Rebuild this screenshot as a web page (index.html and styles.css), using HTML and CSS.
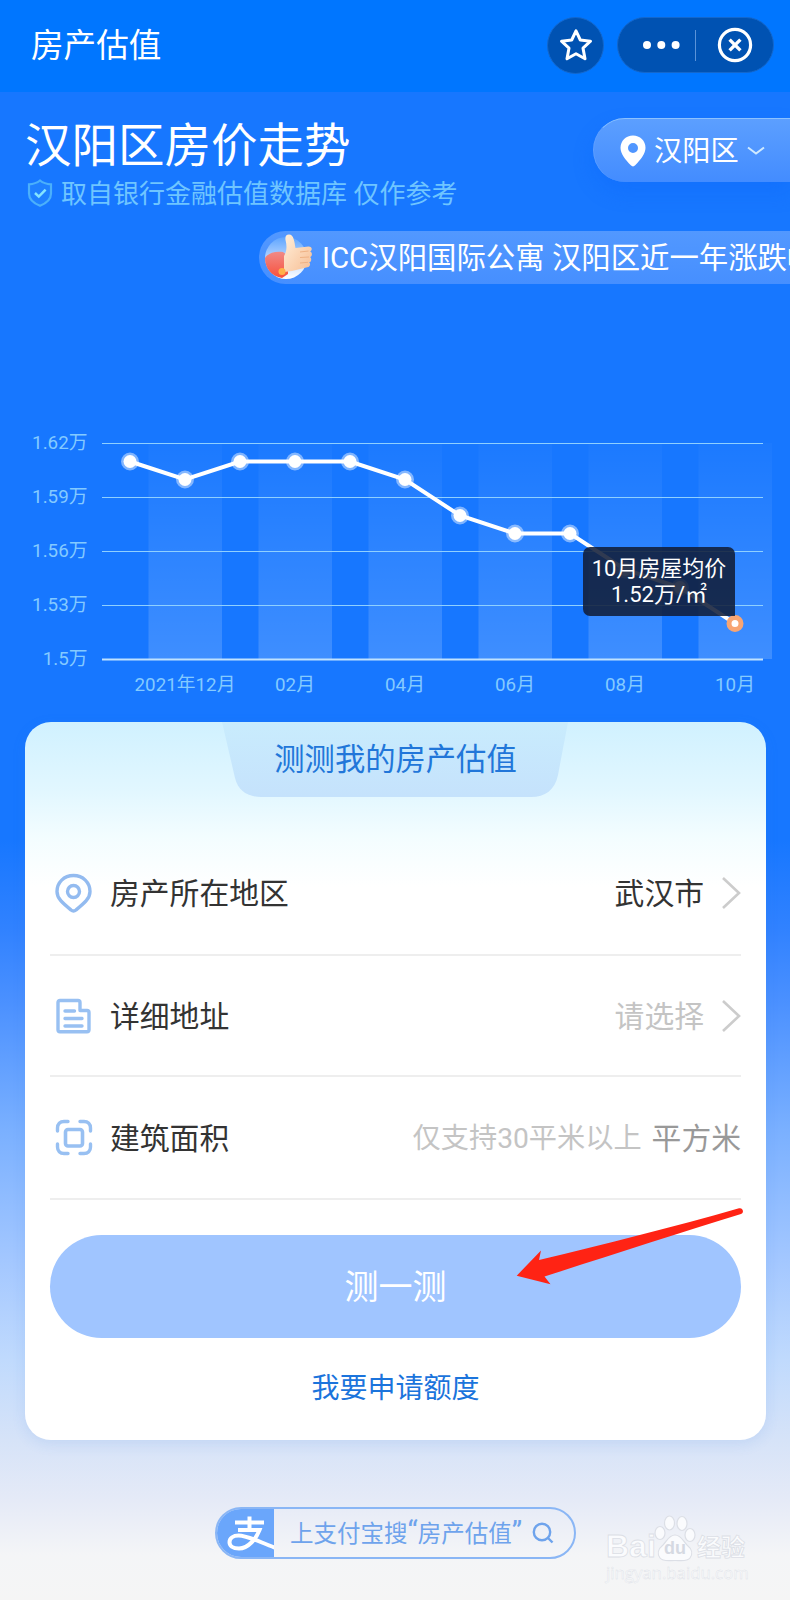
FILE: index.html
```html
<!DOCTYPE html>
<html lang="zh-CN">
<head>
    <meta charset="UTF-8">
    <meta name="viewport" content="width=device-width, initial-scale=1.0">
    <title>房产估值</title>
    <link rel="stylesheet" href="styles.css">
</head>
<body>
    <header class="navbar">
        <h1 class="navbar-title">房产估值</h1>
        <button class="star-btn" aria-label="收藏">
            <svg width="34" height="34" viewBox="0 0 34 34"><path d="M17 2.800l4.300 9.200 10.200 1.200-7.500 6.900 2 10.600L17 25.800 8 30.700l2-10.600-7.500-6.900L12.700 12z" fill="none" stroke="#fff" stroke-width="3" stroke-linejoin="round"/></svg>
        </button>
        <div class="capsule">
            <svg class="dots" width="38" height="10" viewBox="0 0 38 10" fill="#fff"><circle cx="5" cy="5" r="4"/><circle cx="19.300" cy="5" r="4"/><circle cx="33.600" cy="5" r="4"/></svg>
            <span class="capsule-line"></span>
            <svg class="close" width="36" height="36" viewBox="0 0 36 36" fill="none" stroke="#fff"><circle cx="18" cy="18" r="15.600" stroke-width="3.200"/><path d="M12.600 12.600l10.800 10.800M23.400 12.600L12.600 23.400" stroke-width="3.400"/></svg>
        </div>
    </header>

    <section class="hero">
        <div class="hero-text">
            <h2 class="hero-title">汉阳区房价走势</h2>
            <p class="hero-sub">
                <svg width="26" height="28" viewBox="0 0 26 28"><path d="M13 1.500c3.500 2.800 7 3.600 11 3.800v9.200c0 6-4.500 9.700-11 12.300C6.500 24.200 2 20.500 2 14.500V5.300c4-.2 7.500-1 11-3.800z" fill="#1f80ff" stroke="#4bb0fb" stroke-width="2.200"/><path d="M8 14l3.800 3.600 6.800-7" fill="none" stroke="#84e4ff" stroke-width="2.500"/></svg>
                <span>取自银行金融估值数据库 仅作参考</span>
            </p>
        </div>
        <div class="region">
            <svg width="26" height="32" viewBox="0 0 26 32"><path fill="#fff" fill-rule="evenodd" d="M13 .5C6 .5.500 5.800.500 12.700c0 6.300 5 12 10.300 17.600 1.300 1.500 3.100 1.500 4.400 0C20.500 24.700 25.500 19 25.500 12.700 25.500 5.800 20 .5 13 .5zm0 7.500a5 5 0 1 0 0 10 5 5 0 0 0 0-10z"/></svg>
            <span>汉阳区</span>
            <svg class="region-arrow" width="18" height="10" viewBox="0 0 18 10"><path d="M1 1.500l8 6 8-6" fill="none" stroke="#cfeaff" stroke-width="2"/></svg>
        </div>
    </section>

    <div class="ticker">
        <svg width="52" height="50" viewBox="0 0 52 50">
            <defs>
                <linearGradient id="ball" x1="0" y1="0" x2="0" y2="1"><stop offset="0" stop-color="#5ea5ff"/><stop offset=".5" stop-color="#b4d4ff"/><stop offset="1" stop-color="#fff"/></linearGradient>
                <linearGradient id="sleeve" x1="0" y1="0" x2="0" y2="1"><stop offset="0" stop-color="#f08a86"/><stop offset="1" stop-color="#f8503c"/></linearGradient>
                <linearGradient id="hand" x1="0" y1="0" x2="1" y2="1"><stop offset="0" stop-color="#fff0dc"/><stop offset="1" stop-color="#f7bd92"/></linearGradient>
            </defs>
            <circle cx="24" cy="25" r="21" fill="url(#ball)"/>
            <path d="M3 25c3-5 10-7 18-6l5 4v18l-6 4C9 43 3 35 3 25z" fill="url(#sleeve)"/>
            <path d="M22 23c3-5 3-10 1.500-16C23 3.500 24 1.500 27 1.500c5 0 5.500 8 6.500 13.500l13-1.500c4 0 4 4 1.500 5 2.500.5 2.500 5 0 5.500 2 1 1.500 5-.8 5.300 1.800 1.500.8 5-2 5L30 38l-8 1z" fill="url(#hand)"/>
            <path d="M38 19l8.500-1M38 24.500l9-.5M38 30l8-.7" stroke="#eeb184" stroke-width="1" fill="none"/>
            <circle cx="20" cy="38.500" r="3.500" fill="#ffb14a"/>
        </svg>
        <span>ICC汉阳国际公寓 汉阳区近一年涨跌幅</span>
    </div>

    <section class="chart">
        <svg width="790" height="290" viewBox="0 420 790 290">
            <defs>
                <linearGradient id="band" x1="0" y1="0" x2="0" y2="1"><stop offset="0" stop-color="#fff" stop-opacity="0.02"/><stop offset="1" stop-color="#fff" stop-opacity=".17"/></linearGradient>
            </defs>
            <g fill="url(#band)">
                <rect x="148.500" y="443" width="73.500" height="216"/>
                <rect x="258.500" y="443" width="73.500" height="216"/>
                <rect x="368.500" y="443" width="73.500" height="216"/>
                <rect x="478.500" y="443" width="73.500" height="216"/>
                <rect x="588.500" y="443" width="73.500" height="216"/>
                <rect x="698.500" y="443" width="73.500" height="216"/>
            </g>
            <g stroke="#8fd0ff" stroke-width="1.200">
                <path d="M102 443.500H763M102 497.500H763M102 551.500H763M102 605.500H763"/>
                <path d="M102 659.500H763" stroke="#bfe2ff" stroke-width="2"/>
            </g>
            <g class="axis-y">
                <text x="87.500" y="449">1.62万</text>
                <text x="87.500" y="503">1.59万</text>
                <text x="87.500" y="557">1.56万</text>
                <text x="87.500" y="611">1.53万</text>
                <text x="87.500" y="665">1.5万</text>
            </g>
            <g class="axis-x">
                <text x="185" y="691">2021年12月</text>
                <text x="295" y="691">02月</text>
                <text x="405" y="691">04月</text>
                <text x="515" y="691">06月</text>
                <text x="625" y="691">08月</text>
                <text x="735" y="691">10月</text>
            </g>
            <polyline points="130,461.500 185,479.500 240,461.500 295,461.500 350,461.500 405,479.500 460,515.500 515,533.500 570,533.500 625,569.500 680,587.500 735,623.500" fill="none" stroke="#fff" stroke-width="4"/>
            <g fill="#fff" stroke="#fff" stroke-opacity=".45" stroke-width="5">
                <circle cx="130" cy="461.500" r="6.500"/>
                <circle cx="185" cy="479.500" r="6.500"/>
                <circle cx="240" cy="461.500" r="6.500"/>
                <circle cx="295" cy="461.500" r="6.500"/>
                <circle cx="350" cy="461.500" r="6.500"/>
                <circle cx="405" cy="479.500" r="6.500"/>
                <circle cx="460" cy="515.500" r="6.500"/>
                <circle cx="515" cy="533.500" r="6.500"/>
                <circle cx="570" cy="533.500" r="6.500"/>
                <circle cx="625" cy="569.500" r="6.500"/>
                <circle cx="680" cy="587.500" r="6.500"/>
            </g>
            <circle cx="735" cy="623.500" r="6" fill="#fff" stroke="#f8a573" stroke-width="5"/>
        </svg>
        <div class="tooltip">10月房屋均价<br>1.52万/㎡</div>
    </section>

    <main class="card">
        <div class="card-tab">
            <svg class="card-tab-bg" width="352" height="75" viewBox="0 0 352 75">
                <defs><linearGradient id="tab" x1="0" y1="0" x2="0" y2="1"><stop offset="0" stop-color="#c9ecfd"/><stop offset="1" stop-color="#c5e2fc"/></linearGradient></defs>
                <path d="M2 0H348L338 53C335 68 325 75 311 75H41C27 75 18 68 15 56Z" fill="url(#tab)"/>
            </svg>
            <span class="card-tab-text">测测我的房产估值</span>
        </div>

        <div class="row row-first">
            <svg class="row-icon" width="38" height="40" viewBox="0 0 38 40" fill="none" stroke="#93bbf0" stroke-width="3.400"><path d="M18.500 2.500C9 2.500 2 9.500 2 18.500c0 7 5.500 11.500 14 18.500 1.800 1.500 3.200 1.500 5 0 8.500-7 14-11.500 14-18.500C35 9.500 28 2.500 18.500 2.500z"/><circle cx="18.500" cy="18.500" r="6"/></svg>
            <span class="row-label">房产所在地区</span>
            <span class="row-value">武汉市</span>
            <svg class="row-arrow" width="20" height="34" viewBox="0 0 20 34"><path d="M2 2l16 15L2 32" fill="none" stroke="#ccc" stroke-width="2.600"/></svg>
        </div>
        <div class="row row-second">
            <svg class="row-icon" width="38" height="38" viewBox="0 0 38 38" fill="none" stroke="#98c0f2" stroke-width="3.400" stroke-linejoin="round" stroke-linecap="round"><path d="M5 3.500h18c1.200 0 2 .8 2 2v8h7c1.200 0 2 .8 2 2v17.300c0 1.200-.8 2-2 2H5c-1.200 0-2-.8-2-2V5.500c0-1.200.8-2 2-2zM10 14h9.500M10 21.500h17M10 29h17"/></svg>
            <span class="row-label">详细地址</span>
            <span class="row-value row-empty">请选择</span>
            <svg class="row-arrow" width="20" height="34" viewBox="0 0 20 34"><path d="M2 2l16 15L2 32" fill="none" stroke="#ccc" stroke-width="2.600"/></svg>
        </div>
        <div class="row row-third">
            <svg class="row-icon" width="38" height="38" viewBox="0 0 38 38" fill="none" stroke="#98c0f2" stroke-width="3.400" stroke-linecap="round"><path d="M2.500 12V9c0-4 2.500-6.500 6.500-6.500h4M25 2.500h4c4 0 6.500 2.500 6.500 6.500v3M2.500 25v3c0 4 2.500 6.500 6.500 6.500h4M25 34.500h4c4 0 6.500-2.500 6.500-6.500v-3"/><rect x="10.500" y="10.500" width="17" height="16.500" rx="2.500" stroke-width="3.600"/></svg>
            <span class="row-label">建筑面积</span>
            <span class="row-hint">仅支持30平米以上</span>
            <span class="row-unit">平方米</span>
        </div>

        <button class="submit">测一测</button>
        <a class="apply" href="#">我要申请额度</a>
        <svg class="pointer" width="232" height="80" viewBox="0 0 232 80"><path d="M225 1.300c4-1 5.500 4.200 2 5.800C165 26 95 49 30.500 69.500l6 7.800L2.700 68.700 27 43.500 25 53C92 37 160 20 225 1.300z" fill="#ff2314"/></svg>
    </main>

    <footer class="footer">
        <div class="search">
            <svg class="search-logo" width="58" height="52" viewBox="0 0 58 52"><rect width="58" height="52" fill="#6aa6fb"/><path d="M19 15.500h29M33.500 9.500v13M22 23h21.500c-3 8-11 18.500-20.500 18.500-6.500 0-9.500-3-9.500-6.300 0-4.200 4-6.700 9-6.700 9 0 21 6.500 36 12" fill="none" stroke="#fff" stroke-width="4"/></svg>
            <span class="search-text">上支付宝搜<b>“</b>房产估值<b>”</b></span>
            <svg class="search-icon" width="22" height="22" viewBox="0 0 22 22" fill="none" stroke="#6ea3ec" stroke-width="2.400"><circle cx="10" cy="10" r="8.200"/><path d="M16 16l4.500 4.500"/></svg>
        </div>
        <div class="watermark">
            <div class="watermark-brand">
                <span class="wm-latin">Bai</span>
                <span class="wm-paw">
                    <svg width="42" height="47" viewBox="0 0 42 47" fill="#fafbfd" stroke="#dcdfe6" stroke-width="1.200"><ellipse cx="6" cy="18" rx="5" ry="6.500"/><ellipse cx="15.500" cy="8" rx="5" ry="7"/><ellipse cx="28" cy="8.500" rx="5" ry="7"/><ellipse cx="36" cy="20" rx="5" ry="6.500"/><path d="M21 20c-6 0-8 6-12 10-5 4-6 9-3 13s9 2.500 15 2.500 12 1.500 15-2.500 2-9-3-13c-4-4-6-10-12-10z"/></svg>
                    <i>du</i>
                </span>
                <span class="wm-cn">经验</span>
            </div>
            <div class="watermark-url">jingyan.baidu.com</div>
        </div>
    </footer>
</body>
</html>
```
FILE: styles.css
```css
* {
    box-sizing: border-box;
}

body {
    margin: 0;
    height: 1600px;
    overflow: hidden;
    font-family: Roboto, "Noto Sans CJK SC", sans-serif;
    background: linear-gradient(to bottom, #1777ff 0, #1777ff 840px, #3182ff 930px, #4a90ff 1000px, #7ab0ff 1130px, #a3c7ff 1260px, #c0dafd 1360px, #d6e3f8 1440px, #e5eaf7 1500px, #f4f5f7 1555px, #f5f5f5 1600px);
}

h1, h2, p {
    margin: 0;
    font-weight: 400;
}

button {
    border: none;
    padding: 0;
    font-family: inherit;
}

svg {
    display: block;
    flex: none;
}

/* top bar */
.navbar {
    display: flex;
    align-items: center;
    height: 92px;
    padding: 0 16px 2px 31px;
    background: #0076ff;
    color: #fff;
}

.navbar-title {
    flex: 1;
    padding-top: 2px;
    font-size: 32.6px;
    line-height: 48px;
}

.star-btn {
    display: flex;
    align-items: center;
    justify-content: center;
    width: 57px;
    height: 57px;
    margin-right: 13px;
    border: 1px solid #1467cb;
    border-radius: 50%;
    background: #0052b2;
}

.capsule {
    display: flex;
    align-items: center;
    width: 157px;
    height: 56px;
    padding-left: 24px;
    border: 1px solid #1467cb;
    border-radius: 28px;
    background: #0052b2;
}

.capsule-line {
    width: 1px;
    height: 31px;
    margin: 0 21px 0 15px;
    background: #5b93d8;
}

/* heading */
.hero {
    display: flex;
    justify-content: space-between;
    height: 139px;
    padding: 26px 0 0 26px;
}

.hero-title {
    margin-left: -1px;
    color: #fff;
    font-size: 46.5px;
    line-height: 57px;
}

.hero-sub {
    display: flex;
    align-items: center;
    gap: 8px;
    margin-top: 1px;
    color: #6fc5ff;
    font-size: 26px;
    line-height: 36px;
    white-space: pre;
}

.hero-sub svg {
    margin: -2px 0 0 1px;
}

.region {
    display: flex;
    align-items: center;
    width: 197px;
    height: 64px;
    padding-left: 26px;
    border-top: 1px solid #8cc2ff;
    border-left: 1px solid #5f9fff;
    border-radius: 32px 0 0 32px;
    background: linear-gradient(#5c9fff, #438cff);
    box-shadow: 0 10px 20px rgba(10, 100, 250, 0.3);
    color: #fff;
    font-size: 28.2px;
    line-height: 40px;
}

.region span {
    margin-left: 8px;
    padding-top: 2px;
}

.region-arrow {
    margin-left: 8px;
}

.ticker {
    display: flex;
    align-items: center;
    height: 53px;
    margin-left: 259px;
    padding-left: 3px;
    overflow: hidden;
    border-radius: 27px 0 0 27px;
    background: linear-gradient(#5298ff, #468fff);
    color: #fff;
    font-size: 29.4px;
    line-height: 40px;
    white-space: nowrap;
}

.ticker span {
    margin-left: 8px;
}

/* price chart */
.chart {
    position: relative;
    height: 290px;
    margin-top: 136px;
}

.axis-y,
.axis-x {
    fill: #84caff;
    font-size: 18.8px;
}

.axis-y {
    text-anchor: end;
}

.axis-x {
    text-anchor: middle;
}

.tooltip {
    position: absolute;
    top: 127px;
    left: 583px;
    width: 152px;
    height: 69px;
    padding-top: 9px;
    border-radius: 7px 7px 0 7px;
    background: rgba(17, 29, 55, 0.87);
    color: #fff;
    font-size: 22px;
    line-height: 26px;
    text-align: center;
}

/* form card */
.card {
    position: relative;
    height: 718px;
    margin: 12px 24px 0 25px;
    padding: 0 25px;
    border-radius: 26px;
    background: linear-gradient(#d0f1ff 0, #e2f7ff 70px, #f3fdff 115px, #fff 165px);
    box-shadow: 0 4px 14px rgba(60, 120, 220, 0.12);
}

.card-tab {
    display: grid;
    justify-content: center;
    height: 75px;
}

.card-tab-bg,
.card-tab-text {
    grid-area: 1 / 1;
}

.card-tab-text {
    color: #2176d9;
    font-size: 30.3px;
    line-height: 75px;
    text-align: center;
}

.row {
    display: flex;
    align-items: center;
    padding-left: 5px;
    border-bottom: 2px solid #eee;
    color: #333;
    font-size: 29.8px;
    line-height: 44px;
}

.row span {
    padding-top: 2px;
}

.row-first {
    height: 124px;
    margin-top: 35px;
}

.row-second {
    height: 121px;
}

.row-third {
    height: 123px;
}

.row-label {
    flex: 1;
    margin-left: 17px;
}

.row-arrow {
    margin-left: 17px;
}

.row-empty {
    color: #c4c4c4;
}

.row-hint {
    color: #c4c4c4;
    font-size: 28.2px;
}

.row-unit {
    margin-left: 10px;
    color: #999;
}

.submit {
    display: block;
    width: 691px;
    height: 103px;
    margin-top: 35px;
    padding-bottom: 4px;
    border-radius: 52px;
    background: #a0c5ff;
    color: #fff;
    font-size: 34px;
}

.apply {
    display: block;
    margin-top: 29px;
    color: #1b74dc;
    font-size: 28px;
    line-height: 44px;
    text-align: center;
    text-decoration: none;
}

/* red arrow lying over the button */
.pointer {
    position: absolute;
    top: 485px;
    left: 489px;
}

/* bottom */
.footer {
    display: flex;
    align-items: flex-start;
    margin-top: 67px;
    padding-left: 215px;
}

.search {
    display: flex;
    align-items: center;
    width: 361px;
    height: 52px;
    overflow: hidden;
    border: 2px solid #8ab6f5;
    border-radius: 26px;
    color: #6ea3ec;
    white-space: nowrap;
}

.search-logo {
    margin-left: -1px;
}

.search-text {
    margin: -2px 0 0 16px;
    font-family: "Noto Sans CJK SC", sans-serif;
    font-size: 23.5px;
}

.search-text b {
    font-family: Roboto, sans-serif;
    font-size: 29px;
    font-weight: 400;
    line-height: 1;
}

.search-icon {
    margin-left: 10px;
}

.watermark {
    margin: 8px 0 0 30px;
    color: #fafbfd;
    line-height: 1;
}

.watermark-brand {
    display: flex;
    align-items: flex-end;
    height: 47px;
}

.wm-latin,
.wm-cn {
    font-weight: 700;
    -webkit-text-stroke: 0.8px #dcdfe6;
}

.wm-latin {
    width: 48px;
    font-family: "Liberation Sans", sans-serif;
    font-size: 32px;
}

.wm-cn {
    margin-left: 1px;
    font-size: 24px;
    line-height: 28px;
}

.wm-paw {
    display: grid;
}

.wm-paw svg,
.wm-paw i {
    grid-area: 1 / 1;
}

.wm-paw i {
    align-self: end;
    padding-bottom: 3px;
    color: #d5d9e2;
    font: bold 18px "Liberation Sans", sans-serif;
    text-align: center;
}

.watermark-url {
    margin-top: 3px;
    font-family: "Open Sans", sans-serif;
    font-size: 16.8px;
    -webkit-text-stroke: 0.4px #dcdfe6;
}
```
